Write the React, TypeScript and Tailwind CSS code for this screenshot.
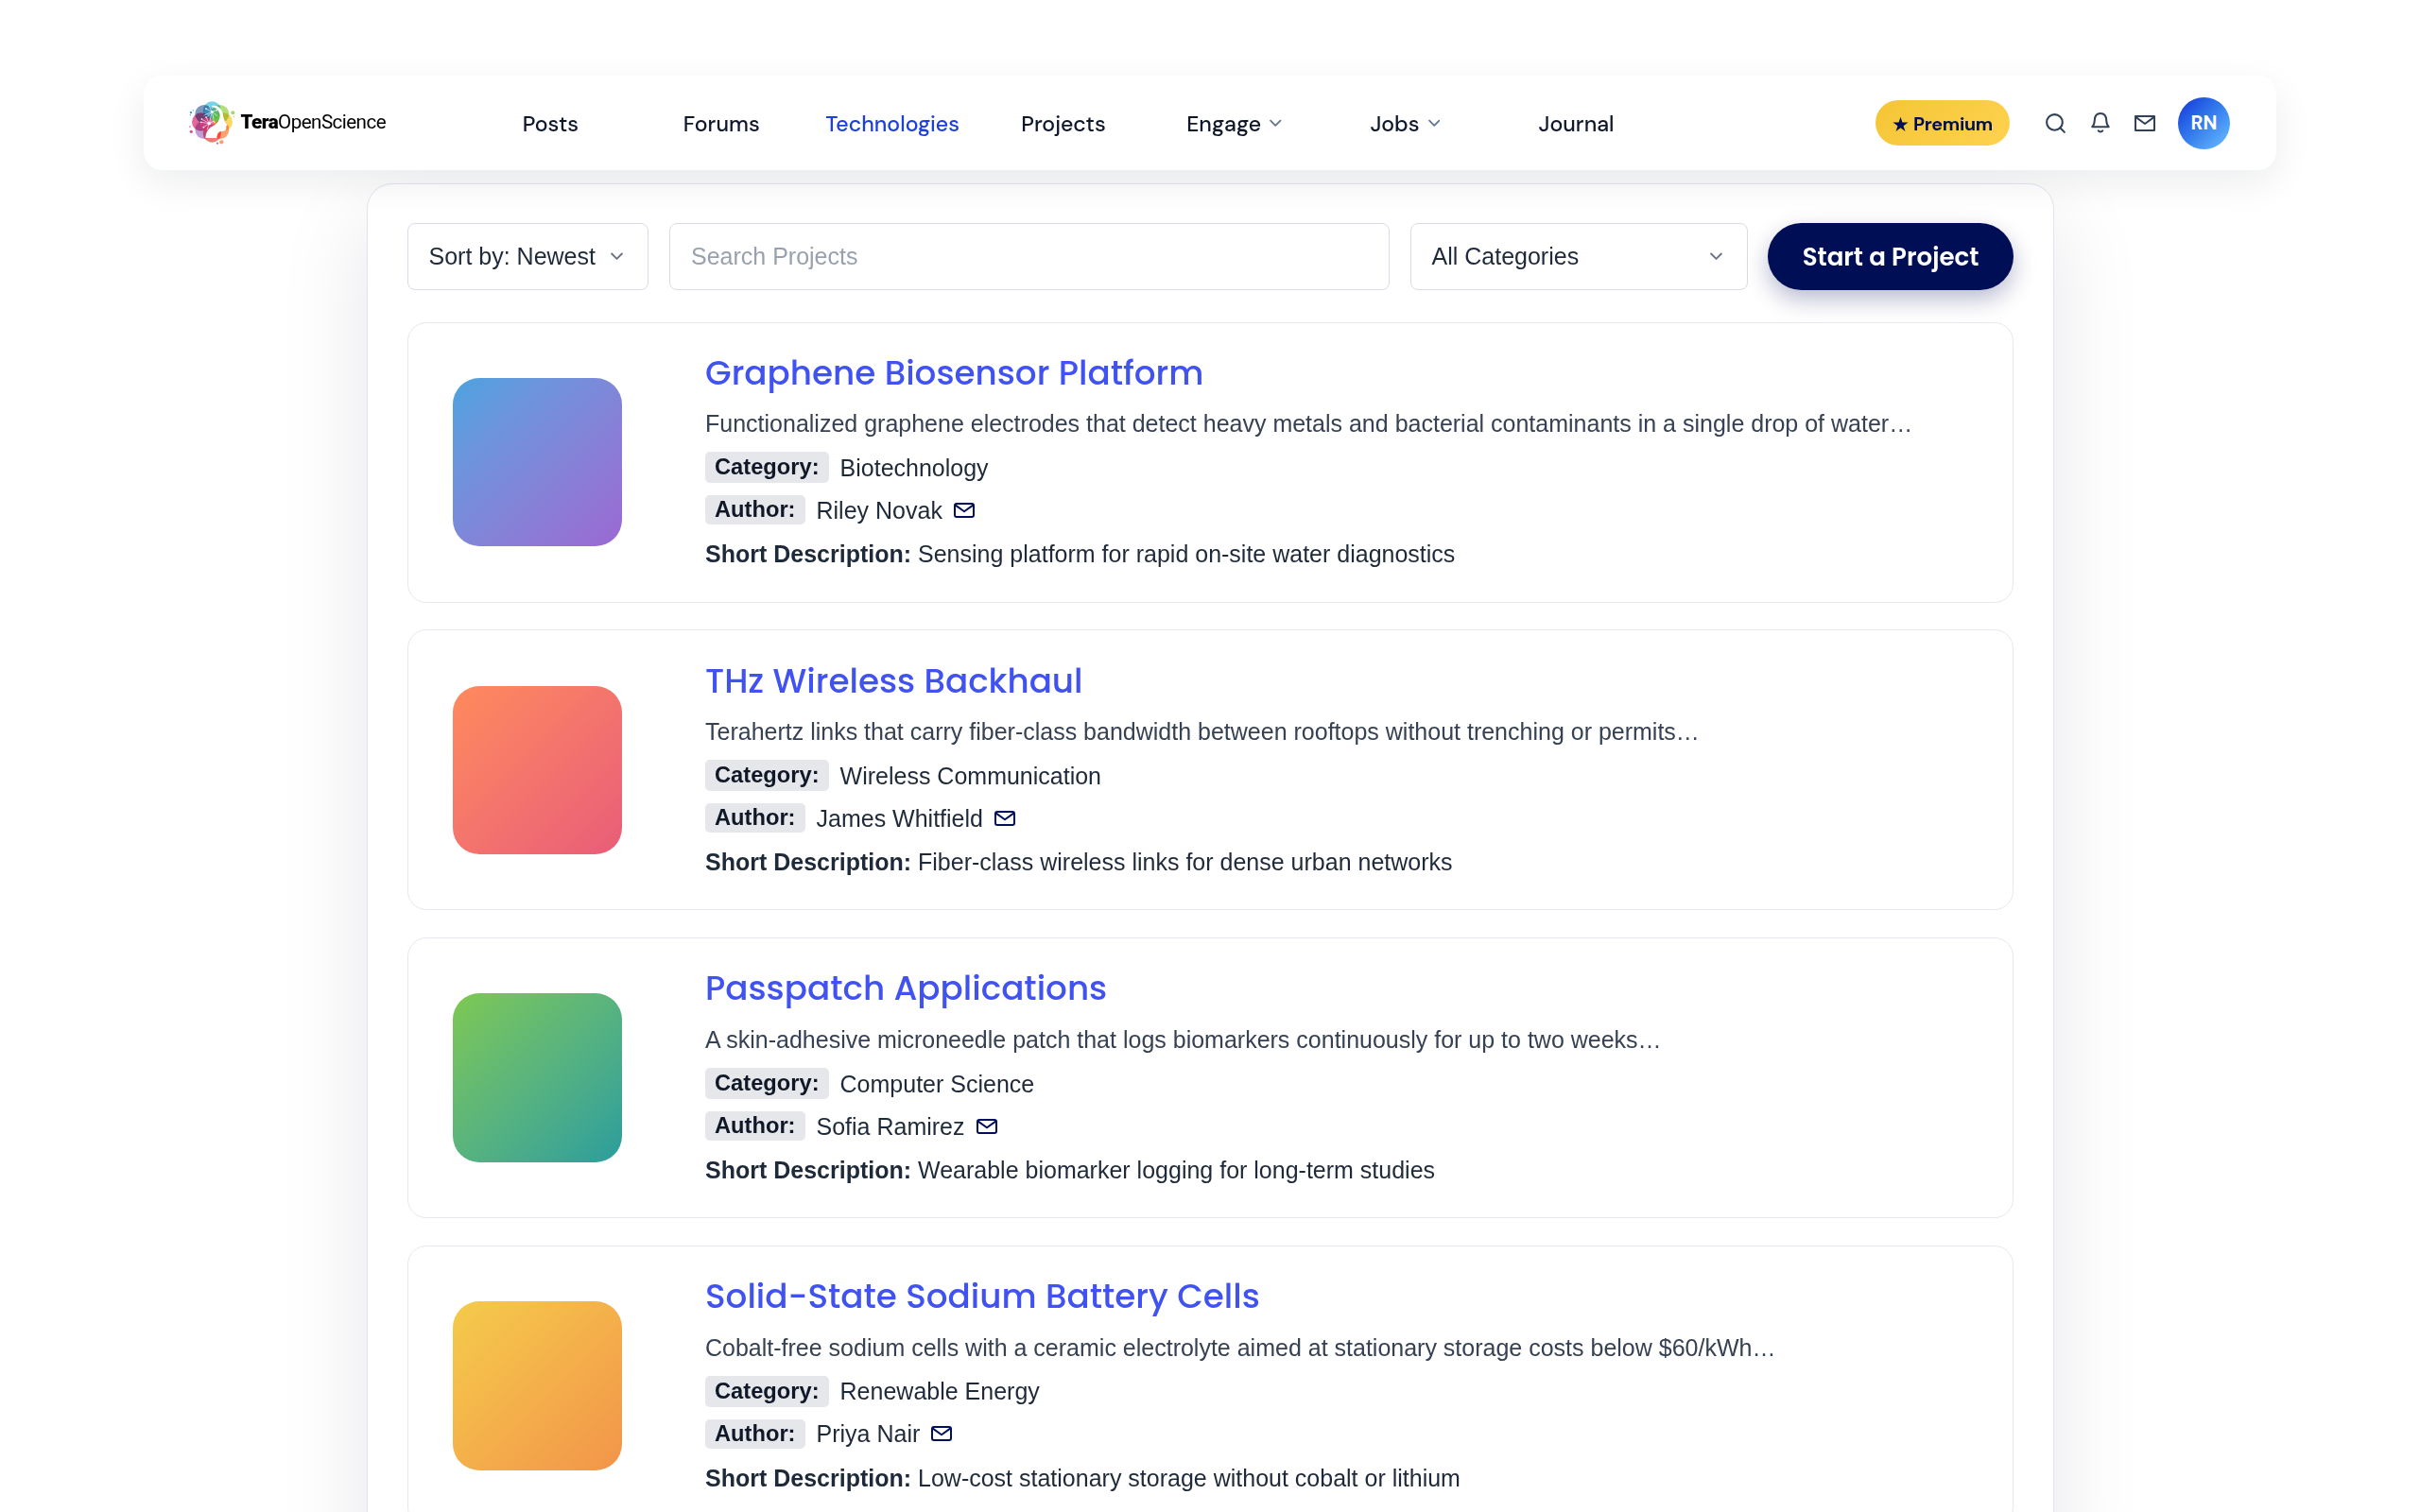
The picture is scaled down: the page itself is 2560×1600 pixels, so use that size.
/**
 * Technologies page
 *
 * Description: Project listing with the floating navigation bar, the filter toolbar
 *              and one card for each technology project.
 */

import { Search } from 'lucide-react';

interface Project {
  title: string;
  summary: string;
  category: string;
  author: string;
  shortDescription: string;
  cover: string;
}

interface NavItem {
  label: string;
  hasMenu?: boolean;
  active?: boolean;
}

const navItems: NavItem[] = [
  { label: 'Posts' },
  { label: 'Forums' },
  { label: 'Technologies', active: true },
  { label: 'Projects' },
  { label: 'Engage', hasMenu: true },
  { label: 'Jobs', hasMenu: true },
  { label: 'Journal' },
];

const projects: Project[] = [
  {
    title: 'Graphene Biosensor Platform',
    summary:
      'Functionalized graphene electrodes that detect heavy metals and bacterial contaminants in a single drop of water…',
    category: 'Biotechnology',
    author: 'Riley Novak',
    shortDescription: 'Sensing platform for rapid on-site water diagnostics',
    cover: 'from-[#4aa3e0] to-[#9b68d2]',
  },
  {
    title: 'THz Wireless Backhaul',
    summary:
      'Terahertz links that carry fiber-class bandwidth between rooftops without trenching or permits…',
    category: 'Wireless Communication',
    author: 'James Whitfield',
    shortDescription: 'Fiber-class wireless links for dense urban networks',
    cover: 'from-[#ff8a5c] to-[#e85d78]',
  },
  {
    title: 'Passpatch Applications',
    summary:
      'A skin-adhesive microneedle patch that logs biomarkers continuously for up to two weeks…',
    category: 'Computer Science',
    author: 'Sofia Ramirez',
    shortDescription: 'Wearable biomarker logging for long-term studies',
    cover: 'from-[#7ec850] to-[#2a9d9c]',
  },
  {
    title: 'Solid-State Sodium Battery Cells',
    summary:
      'Cobalt-free sodium cells with a ceramic electrolyte aimed at stationary storage costs below $60/kWh…',
    category: 'Renewable Energy',
    author: 'Priya Nair',
    shortDescription: 'Low-cost stationary storage without cobalt or lithium',
    cover: 'from-[#f4cb4a] to-[#f2944a]',
  },
];

const petals = [
  { cx: 97, cy: 51, fill: '#5fcbe6' },
  { cx: 122, cy: 62, fill: '#a5d867' },
  { cx: 133, cy: 87, fill: '#fdd04b' },
  { cx: 122, cy: 112, fill: '#ff8f5a' },
  { cx: 97, cy: 123, fill: '#f4605c' },
  { cx: 72, cy: 112, fill: '#b58fd3' },
  { cx: 62, cy: 87, fill: '#e04c8b' },
  { cx: 72, cy: 62, fill: '#6784ae' },
];

const Emblem = () => (
  <svg width="64" height="60" viewBox="0 0 192 180" className="shrink-0" aria-hidden="true">
    <g className="isolate">
      {petals.map((p) => (
        <circle
          key={p.fill}
          cx={p.cx}
          cy={p.cy}
          r="29"
          fill={p.fill}
          fillOpacity="0.85"
          className="mix-blend-multiply"
        />
      ))}
      <circle cx="82" cy="94" r="22" fill="#dd3f7c" fillOpacity="0.7" />
      <circle cx="108" cy="72" r="14" fill="#5cbf4c" fillOpacity="0.8" />
      <circle cx="88" cy="56" r="14" fill="#3a9fc4" fillOpacity="0.6" />
    </g>
    <path
      d="M97 36C113 33 127 42 131 60C132 74 136 84 145 97C142 100 141 101 142 104C143 113 138 117 126 117C116 119 113 126 112 138H76C77 122 82 112 92 104C108 99 120 86 122 70C122 54 112 41 97 40Z"
      fill="#fff"
    />
    <g stroke="#fff" strokeWidth="1.8" strokeLinecap="round">
      <path d="M97 55L78 45M97 55L88 38M97 55L112 50M97 55L114 68M97 55L102 78M97 55L88 92M97 55L72 66M97 55L80 72" />
      <path d="M88 92L64 78M88 92L62 88M88 92L70 104M88 92L78 72M88 92L104 84M88 92L82 110" />
    </g>
    <g fill="#fff">
      <circle cx="97" cy="55" r="4" />
      <circle cx="88" cy="92" r="5" />
      <circle cx="78" cy="45" r="2.6" />
      <circle cx="112" cy="50" r="2.4" />
      <circle cx="64" cy="78" r="2.4" />
      <circle cx="62" cy="88" r="2.4" />
      <circle cx="78" cy="72" r="2.4" />
      <circle cx="70" cy="104" r="2.4" />
    </g>
    <circle cx="30" cy="57" r="3.6" fill="#3fa0cf" />
    <circle cx="37" cy="50" r="2" fill="#5fb6da" />
    <circle cx="28" cy="65" r="1.8" fill="#5f7fae" />
    <circle cx="27" cy="102" r="3.2" fill="#f39ab6" />
    <circle cx="31" cy="118" r="4.8" fill="#e04c8b" />
    <circle cx="163" cy="58" r="6" fill="#a5d867" />
    <circle cx="166" cy="70" r="2.4" fill="#c5dd66" />
    <circle cx="127" cy="151" r="6.4" fill="#ff9b74" />
    <circle cx="114" cy="155" r="3.2" fill="#f4605c" />
  </svg>
);

const Chevron = ({ className }: { className?: string }) => (
  <svg
    width="14"
    height="9"
    viewBox="0 0 14 9"
    fill="none"
    stroke="currentColor"
    strokeWidth="2"
    strokeLinecap="round"
    strokeLinejoin="round"
    className={className}
  >
    <path d="M1.2 1.3L7 7.1L12.8 1.3" />
  </svg>
);

const AuthorMailIcon = () => (
  <svg
    width="22"
    height="16"
    viewBox="0 0 22 16"
    fill="none"
    stroke="#000f5a"
    strokeWidth="2"
    strokeLinejoin="round"
  >
    <rect x="1" y="1" width="20" height="14" rx="2" />
    <path d="M1.4 2.4L11 9.2L20.6 2.4" />
  </svg>
);

const Logo = () => (
  <div className="flex items-center">
    <Emblem />
    <p className="relative -top-px -ml-[1.5px] font-['Roboto',sans-serif] text-[20.6px] leading-none tracking-[-0.55px] text-black">
      <span className="font-black">Tera</span>
      <span>OpenScience</span>
    </p>
  </div>
);

const Header = () => (
  <header className="relative z-10 flex h-[100px] w-[2256px] shrink-0 items-center rounded-[20px] bg-white pl-10 pr-[49px] shadow-[0_13px_39px_rgba(15,23,42,0.08)]">
    <div className="w-[300px] shrink-0">
      <Logo />
    </div>
    <nav className="grid w-[1266px] grid-cols-7 font-['DM_Sans','Inter',sans-serif] text-[23.1px] font-medium leading-8">
      {navItems.map((item) => (
        <a
          key={item.label}
          className={`flex items-center justify-center gap-[9px] pt-px ${
            item.active ? 'text-[#1d40dc]' : 'text-slate-900'
          }`}
        >
          {item.label}
          {item.hasMenu && <Chevron className="mr-px w-[12.5px] text-slate-500" />}
        </a>
      ))}
    </nav>
    <div className="ml-auto flex items-center">
      <button className="flex h-12 w-[142px] items-center justify-center gap-[5px] rounded-full bg-linear-135 from-[#f4c534] to-[#ffd24f] pt-1 font-['DM_Sans','Inter',sans-serif] text-[19.6px] font-bold tracking-[-0.3px] text-[#000f55]">
        <svg width="17" height="17" viewBox="0 0 24 24" fill="currentColor" className="-mt-0.5">
          <path d="M12 1l2.7 8.2h8.6l-7 5.1 2.7 8.2-7-5.1-7 5.1 2.7-8.2-7-5.1h8.6z" />
        </svg>
        Premium
      </button>
      <div className="flex items-center text-slate-700">
        <Search size={25} strokeWidth={2} className="ml-[36px]" />
        <svg
          width="20"
          height="22"
          viewBox="0 0 20 22"
          fill="none"
          stroke="currentColor"
          strokeWidth="2"
          strokeLinecap="round"
          strokeLinejoin="round"
          className="ml-[25px]"
        >
          <path d="M1.3 15.3H18.7C17.2 13.8 16.4 11.8 16.2 8.2C16 3.8 13.6 1.1 10 1.1C6.4 1.1 4 3.8 3.8 8.2C3.6 11.8 2.8 13.8 1.3 15.3Z" />
          <path d="M7.7 19.3C8.6 21 11.4 21 12.3 19.3" />
        </svg>
        <svg
          width="22"
          height="17"
          viewBox="0 0 22 17"
          fill="none"
          stroke="currentColor"
          strokeWidth="2"
          strokeLinejoin="round"
          className="ml-[26px] mt-px"
        >
          <path d="M1 1H21V16H1Z" />
          <path d="M1 1.6L11 9L21 1.6" />
        </svg>
      </div>
      <div className="ml-[24px] flex size-[55px] items-center justify-center rounded-full bg-linear-135 from-[#1d40dc] from-10% to-[#6cc0ff] font-['DM_Sans','Inter',sans-serif] text-[20.5px] font-bold text-white">
        RN
      </div>
    </div>
  </header>
);

const Toolbar = () => (
  <div className="flex h-[71.5px] gap-[22px] text-[25px] text-gray-800">
    <button className="flex w-[255px] items-center justify-between rounded-lg border border-[#d8dce6] pl-[21.5px] pr-[26px]">
      Sort by: Newest
      <Chevron className="w-[13px] text-gray-500" />
    </button>
    <input
      placeholder="Search Projects"
      className="min-w-0 flex-1 rounded-lg border border-[#d8dce6] px-[22px] placeholder:text-gray-400"
    />
    <button className="flex w-[357px] items-center justify-between rounded-lg border border-[#d8dce6] pl-[21.5px] pr-[26px]">
      All Categories
      <Chevron className="w-[13px] text-gray-500" />
    </button>
    <button className="-ml-px w-[260px] rounded-full bg-[#000f55] pt-0.5 font-['Poppins','Inter',sans-serif] text-[26.1px] font-semibold text-white shadow-[0_10px_24px_rgba(0,15,85,0.28)]">
      Start a Project
    </button>
  </div>
);

const ProjectCard = ({ project }: { project: Project }) => {
  return (
    <article className="flex h-[297px] items-center rounded-[20px] border border-[#e6e8ef] bg-white pl-[47px]">
      <div className={`size-[178.5px] shrink-0 rounded-[28px] bg-linear-135 ${project.cover}`} />
      <div className="ml-[88.5px] self-start pt-[26.3px] text-[25px] text-gray-800">
        <h2 className="font-['Poppins','Inter',sans-serif] text-[35.75px] font-medium leading-[54px] text-[#4052f2]">
          {project.title}
        </h2>
        <p className="mt-[8.7px] leading-9 text-gray-700">{project.summary}</p>
        <div className="mt-3 flex h-[33px] items-center gap-3">
          <span className="h-[33px] rounded-[5px] bg-gray-200 px-2.5 text-[23.7px] font-bold leading-8 text-gray-900">
            Category:
          </span>
          <span className="leading-8">{project.category}</span>
        </div>
        <div className="mt-[13px] flex h-[31px] items-center">
          <span className="h-[31px] rounded-[5px] bg-gray-200 px-2.5 text-[23.7px] font-bold leading-[31px] text-gray-900">
            Author:
          </span>
          <span className="ml-3 mr-3 leading-[30px]">{project.author}</span>
          <AuthorMailIcon />
        </div>
        <p className="mt-[13px] leading-9">
          <span className="font-bold">Short Description:</span> {project.shortDescription}
        </p>
      </div>
    </article>
  );
};

export default function App() {
  return (
    <div className="flex h-[1600px] w-[2560px] flex-col items-center overflow-hidden bg-white pt-20 font-['Liberation_Sans',Arial,sans-serif]">
      <Header />
      <main className="mt-3.5 flex w-[1785px] shrink-0 flex-col rounded-[27px] border border-[#e2e5f0] bg-white pb-10 pl-[42.5px] pr-[41.5px] pt-[40.5px] shadow-[0_33px_98px_rgba(15,23,60,0.1)]">
        <Toolbar />
        <section className="mt-[33.5px] flex flex-col gap-[28.8px]">
          {projects.map((project) => (
            <ProjectCard key={project.title} project={project} />
          ))}
        </section>
      </main>
    </div>
  );
}
